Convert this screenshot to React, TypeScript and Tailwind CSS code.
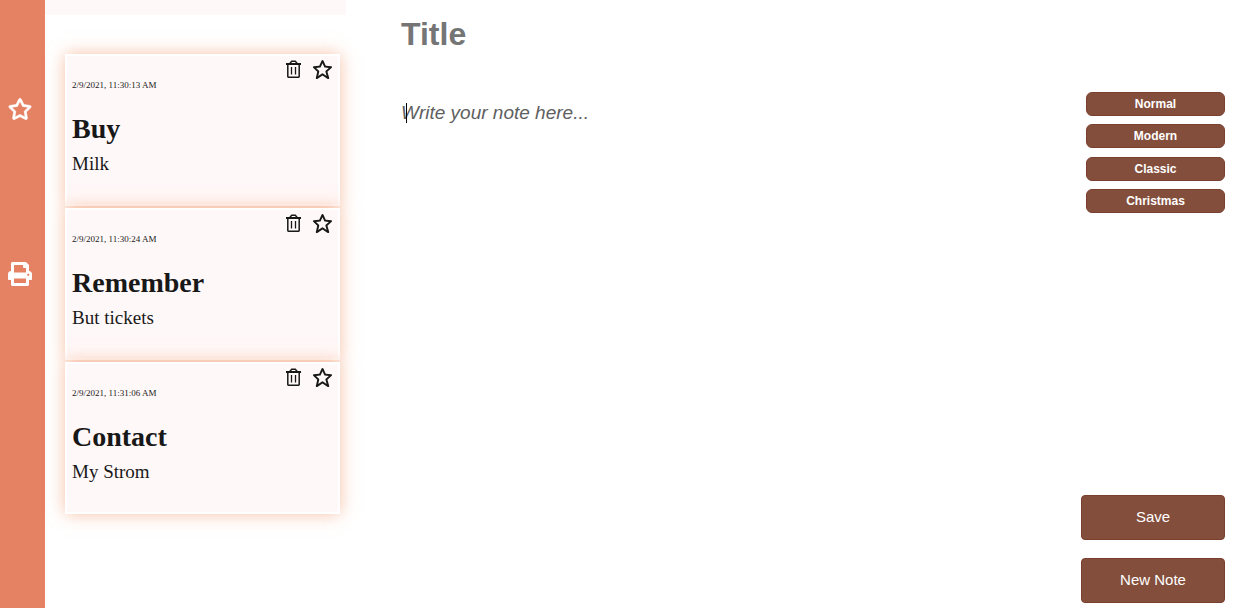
import React from "react";
import { FaPrint, FaRegStar } from "react-icons/fa";
import { BiStar } from "react-icons/bi";

type Note = { date: string; title: string; body: string };

const notes: Note[] = [
  { date: "2/9/2021, 11:30:13 AM", title: "Buy", body: "Milk" },
  { date: "2/9/2021, 11:30:24 AM", title: "Remember", body: "But tickets" },
  { date: "2/9/2021, 11:31:06 AM", title: "Contact", body: "My Strom" },
];

const themes = ["Normal", "Modern", "Classic", "Christmas"];
const actions = ["Save", "New Note"];

function TrashIcon() {
  return (
    <svg viewBox="0 0 15 18" className="h-[18px] w-[15px]" fill="none" stroke="currentColor" strokeWidth="1.5" aria-hidden="true">
      <path d="M0 4h15" strokeWidth="2" />
      <path d="M4.2 3.6V3L5.7 1.3h3.6L10.8 3v.6" />
      <path d="M1.8 4v12.6q0 .6.6.6h10.2q.6 0 .6-.6V4" />
      <path d="M5.5 7v7.4M9.5 7v7.4" strokeWidth="1.3" />
    </svg>
  );
}

function NoteCard({ note }: { note: Note }) {
  return (
    <li className="h-[152px] border-2 border-white bg-[#fff8f8] px-[5px] font-['Liberation_Serif',serif] text-[#181818] shadow-[0_0_16px_rgba(242,150,105,0.6)]">
      <div className="flex h-6 items-end justify-end gap-[9px]">
        <button type="button" aria-label="Delete note" className="flex h-[22px] w-[19px] items-center justify-center">
          <TrashIcon />
        </button>
        <button type="button" aria-label="Favourite note" className="flex h-[22px] w-[21px] items-center justify-center">
          <BiStar size={23} className="shrink-0" />
        </button>
      </div>
      <p className="text-[9px] leading-[10px]">{note.date}</p>
      <h2 className="mt-[23px] text-[28px] leading-8 font-bold">{note.title}</h2>
      <p className="mt-[7px] text-[19px] leading-6">{note.body}</p>
    </li>
  );
}

export default function App() {
  return (
    <div className="flex h-screen overflow-hidden bg-white font-['Liberation_Sans',sans-serif]">
      <nav className="flex w-[45px] shrink-0 flex-col items-start gap-[140px] bg-[#e58263] pt-24 pl-[6px] text-white">
        <button type="button" aria-label="Favourites" className="flex h-[25px] w-7 items-center justify-center">
          <FaRegStar size={24} stroke="currentColor" strokeWidth={16} className="shrink-0 overflow-visible" />
        </button>
        <button type="button" aria-label="Print" className="flex h-[25px] w-7 items-center justify-center">
          <FaPrint size={24} />
        </button>
      </nav>
      <aside className="w-[301px] shrink-0">
        <div className="h-[15px] bg-[#fff8f8]" />
        <ul className="mt-[39px] flex flex-col gap-[2px] pr-[6px] pl-5">
          {notes.map((note) => (
            <NoteCard key={note.date} note={note} />
          ))}
        </ul>
      </aside>
      <main className="flex min-w-0 grow justify-between pr-5 pl-[55px]">
        <div className="flex min-w-0 grow flex-col pt-[14px]">
          <input
            aria-label="Title"
            placeholder="Title"
            className="h-10 w-full text-[32px] font-bold outline-none placeholder:text-[#757575] placeholder:opacity-100"
          />
          <div className="relative mt-[47px] grow">
            <textarea
              aria-label="Note"
              placeholder="Write your note here..."
              className="h-full w-full resize-none text-[19px] leading-6 italic outline-none placeholder:text-[#606060] placeholder:opacity-100"
            />
            <span className="absolute top-[2px] left-[5px] h-5 w-px bg-black" />
          </div>
        </div>
        <div className="flex w-36 shrink-0 flex-col justify-between pt-[92px] pb-[5px]">
          <div className="flex h-[121px] flex-col justify-between pl-[5px]">
            {themes.map((name) => (
              <button key={name} type="button" className="h-6 rounded-md border border-[#7a3f2d] bg-[#844e3c] text-[12px] font-bold text-white">
                {name}
              </button>
            ))}
          </div>
          <div className="flex flex-col gap-[18px]">
            {actions.map((name) => (
              <button key={name} type="button" className="h-[45px] rounded border border-[#7a3f2d] bg-[#844e3c] text-[15px] text-white">
                {name}
              </button>
            ))}
          </div>
        </div>
      </main>
    </div>
  );
}
